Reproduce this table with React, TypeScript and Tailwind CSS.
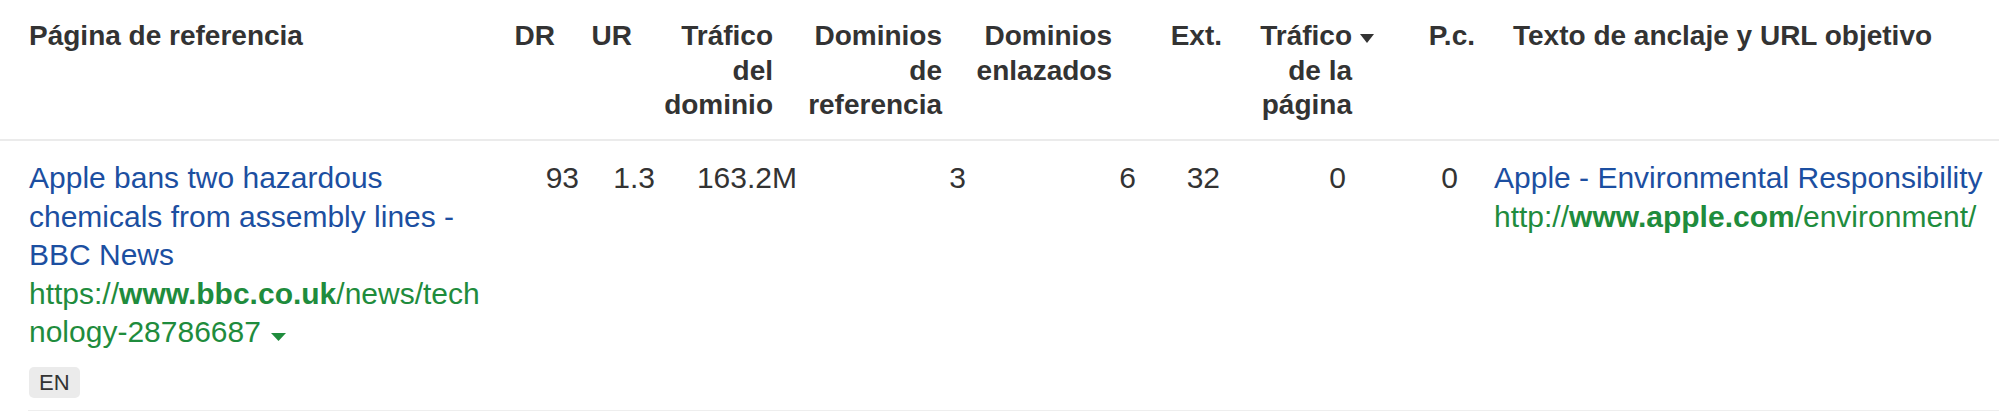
const FONT = { fontFamily: '"Liberation Sans", Arial, Helvetica, sans-serif' };

const cols =
  "grid grid-cols-[510px_73px_76px_142px_169px_170px_84px_150px_108px_1fr]";

function SortArrow() {
  return (
    <svg
      width="14"
      height="9"
      viewBox="0 0 14 9"
      className="absolute right-0 top-[34px]"
    >
      <path d="M0 0 L14 0 L7 9 Z" fill="#333333" />
    </svg>
  );
}

function Head() {
  const h = "pt-[19px] text-[28px] leading-[34.5px] font-bold text-[#333333]";
  return (
    <div className={`${cols} h-[141px] border-b-2 border-[#ebebeb]`}>
      <div className={`${h} pl-[29px]`}>Página de referencia</div>
      <div className={`${h} text-right pr-[28px]`}>DR</div>
      <div className={`${h} text-right pr-[27px]`}>UR</div>
      <div className={`${h} text-right pr-[28px]`}>Tráfico del dominio</div>
      <div className={`${h} text-right pr-[28px]`}>Dominios de referencia</div>
      <div className={`${h} text-right pr-[28px]`}>Dominios enlazados</div>
      <div className={`${h} text-right pr-[2px]`}>Ext.</div>
      <div className={`${h} relative text-right pr-[22px]`}>
        Tráfico de la página
        <SortArrow />
      </div>
      <div className={`${h} text-right pr-[7px]`}>P.c.</div>
      <div className={`${h} pl-[31px]`}>Texto de anclaje y URL objetivo</div>
    </div>
  );
}

function Row() {
  const c = "pt-[18px] text-[30px] leading-[38.5px] text-[#333333]";
  const link = "text-[#1c4fa1]";
  const green = "text-[#1f8c3d]";
  return (
    <div className={cols}>
      <div className={`${c} pl-[29px] pr-[20px]`}>
        <div className={link}>
          Apple bans two hazardous chemicals from assembly lines - BBC News
        </div>
        <div className={`${green} break-all`}>
          https://<b>www.bbc.co.uk</b>/news/technology-28786687
          <svg
            width="15"
            height="8"
            viewBox="0 0 15 8"
            className="ml-[10px] inline-block align-[1px]"
          >
            <path d="M0 0 L15 0 L7.5 8 Z" fill="#1f8c3d" />
          </svg>
        </div>
        <div className="mt-[15px] mb-[12px] inline-block h-[31px] rounded-[5px] bg-[#ebebeb] px-[10px] text-[22px] leading-[31px] text-[#333333]">
          EN
        </div>
      </div>
      <div className={`${c} text-right pr-[4px]`}>93</div>
      <div className={`${c} text-right pr-[4px]`}>1.3</div>
      <div className={`${c} text-right pr-[4px]`}>163.2M</div>
      <div className={`${c} text-right pr-[4px] ${link}`}>3</div>
      <div className={`${c} text-right pr-[4px] ${link}`}>6</div>
      <div className={`${c} text-right pr-[4px] ${link}`}>32</div>
      <div className={`${c} text-right pr-[28px]`}>0</div>
      <div className={`${c} text-right pr-[24px]`}>0</div>
      <div className={`${c} pl-[12px] whitespace-nowrap`}>
        <div className={link}>Apple - Environmental Responsibility</div>
        <div className={green}>
          http://<b>www.apple.com</b>/environment/
        </div>
      </div>
    </div>
  );
}

export default function App() {
  return (
    <div className="w-[1999px] h-[411px] bg-white overflow-hidden" style={FONT}>
      <Head />
      <Row />
      <div className="ml-[28px] h-[2px] bg-[#eeeeee]" />
    </div>
  );
}
